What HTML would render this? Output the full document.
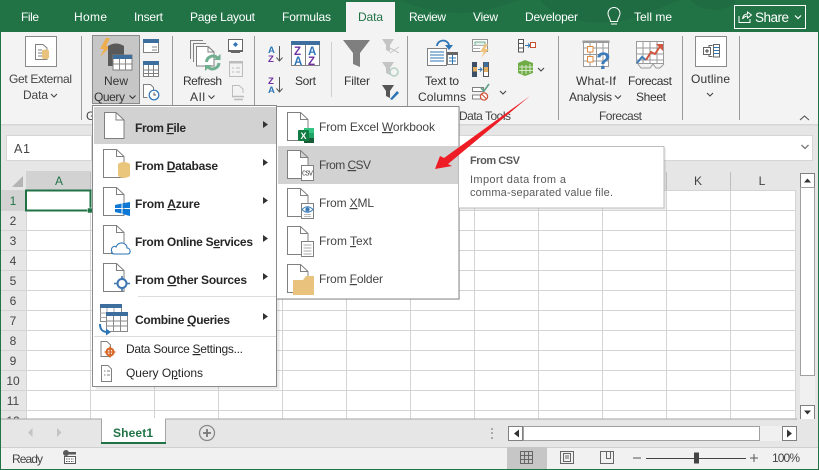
<!DOCTYPE html>
<html><head><meta charset="utf-8"><title>Excel</title>
<style>
html,body{margin:0;padding:0;background:#e6e6e6;overflow:hidden}
svg{display:block}
text{font-family:"Liberation Sans",sans-serif;font-size:12px;fill:#444}
.w{fill:#fff}
.m{fill:#262626}
.b{font-weight:bold;fill:#262626}
.g{fill:#8a8a8a}
.t{font-size:11px;fill:#595959}
.n{fill:#444}
.ln{fill:none;stroke:#7f7f7f;stroke-width:1}
.u{text-decoration:underline}
.grid line{stroke:#d4d4d4;stroke-width:1}
.chev{fill:none;stroke:#444;stroke-width:1.1}
.doc{fill:#fff;stroke:#808080;stroke-width:1}
</style></head><body>
<svg width="819" height="470" viewBox="0 0 819 470" xmlns="http://www.w3.org/2000/svg">
<defs>
<path id="dc" d="M103.500 149.500H116.500L124 156.500V177.500H103.500Z M116.500 149.500V156.500H124" fill="#fff" stroke="#808080"/>
</defs>
<rect width="819" height="470" fill="#e6e6e6"/>
<!-- title -->
<rect width="819" height="32" fill="#217346"/>
<path d="M400 0C430 14 470 18 500 6L520 0ZM540 0C560 24 610 30 650 12L680 0ZM690 0C700 10 715 14 735 4V0Z" fill="#1f6c42"/>
<rect x="346" y="2" width="49" height="30" fill="#f3f3f3"/>
<text class="w" x="21" y="21" textLength="18">File</text>
<text class="w" x="74" y="21" textLength="33">Home</text>
<text class="w" x="134" y="21" textLength="29">Insert</text>
<text class="w" x="190" y="21" textLength="65">Page Layout</text>
<text class="w" x="282" y="21" textLength="49">Formulas</text>
<text x="358" y="21" textLength="25" style="fill:#217346">Data</text>
<text class="w" x="409" y="21" textLength="37">Review</text>
<text class="w" x="473" y="21" textLength="25">View</text>
<text class="w" x="525" y="21" textLength="53">Developer</text>
<path d="M610.500 21.500C610.500 18 608 17 608 13.500A6 6 0 0 1 620 13.500C620 17 617.500 18 617.500 21.500ZM611 24H617" fill="none" stroke="#fff"/>
<text class="w" x="634" y="21" textLength="38">Tell me</text>
<rect x="734.500" y="5.500" width="71" height="23" fill="none" stroke="#fff"/>
<path d="M739 16V22.500H750V19M742.500 19C743 15.500 745 14 747.500 14V12L751.500 15L747.500 18V16C745.500 16 744 17 742.500 19Z" fill="none" stroke="#fff"/>
<text class="w" x="755" y="22" textLength="34" style="font-size:13.500px">Share</text>
<path d="M795 15.500L798 18.500L801 15.500" fill="none" stroke="#fff" stroke-width="1.200"/>
<!-- ribbon -->
<rect y="32" width="819" height="92" fill="#f3f3f3"/>
<rect y="124" width="819" height="1.500" fill="#d6d6d6"/>
<rect y="0" width="1" height="470" fill="#217346"/>
<rect x="818" y="0" width="1" height="470" fill="#217346"/>
<g fill="#9a9a9a">
<rect x="81" y="36" width="1" height="84"/><rect x="172" y="36" width="1" height="84"/><rect x="254" y="36" width="1" height="84"/>
<rect x="407" y="36" width="1" height="84"/><rect x="558" y="36" width="1" height="84"/><rect x="682" y="36" width="1" height="84"/><rect x="739" y="36" width="1" height="84"/>
<rect x="331" y="42" width="1" height="55" fill="#cfcfcf"/>
</g>
<!-- get external -->
<rect x="25.500" y="36.500" width="31" height="30" fill="#fff" stroke="#8a8a8a"/>
<path d="M35.500 44.500H43L47 48V59.500H35.500ZM38 50H42M38 53H42M38 56H42" fill="none" stroke="#7f7f7f"/>
<path d="M42 50.500Q45.500 48.500 49 50.500V58Q45.500 60.500 42 58Z" fill="#e9c37d"/>
<text x="9" y="83" textLength="63">Get External</text>
<text x="23" y="99" textLength="25">Data</text>
<path class="chev" d="M51 94L54 97L57 94"/>
<!-- new query -->
<rect x="92.500" y="35.500" width="47" height="68" fill="#c6c6c6" stroke="#8a8a8a"/>
<path d="M106 38L100 49H104L100 57L111 46H106L110 38Z" fill="#efae4e"/>
<path d="M108 46Q116 41 124 46V66H108Z" fill="#595959"/>
<rect x="113" y="55" width="19" height="15" fill="#fff" stroke="#7f7f7f"/>
<rect x="113" y="55" width="19" height="4" fill="#3d6e9e"/>
<path d="M119.500 59V70M125.500 59V70M113 64H132" stroke="#8a8a8a" fill="none"/>
<text x="104" y="85" textLength="24" style="fill:#333">New</text>
<text x="94" y="101" textLength="31" style="fill:#333">Query</text>
<path d="M129.500 95.500L132.500 98.500L135.500 95.500" fill="none" stroke="#333" stroke-width="1.100"/>
<rect x="143.500" y="39.500" width="15" height="13" fill="#fff" stroke="#808080"/>
<rect x="143" y="39" width="16" height="4" fill="#3d6e9e"/>
<path d="M152 47H157M152 50H157" stroke="#8a8a8a"/>
<rect x="143.500" y="61.500" width="15" height="15" fill="#fff" stroke="#808080"/>
<rect x="143" y="61" width="16" height="4" fill="#3d6e9e"/>
<path d="M143 70H159M143 73.500H159M148.500 65V77M153.500 65V77" stroke="#808080"/>
<path d="M147.500 97.500H143.500V84.500H150.500L153.500 87.500V92" fill="#fff" stroke="#808080"/>
<circle cx="154" cy="95" r="4.800" fill="#fff" stroke="#2e75b6" stroke-width="1.200"/>
<path d="M154 92.500V95H156" fill="none" stroke="#555"/>
<!-- refresh -->
<path d="M190.500 59V40.500H203M193.500 62V43.500H206M196.500 65V46.500H208L214 52V56" fill="none" stroke="#808080"/>
<path d="M196.500 46.500H208L214 52V66H196.500Z" fill="#fff" stroke="#808080"/>
<path d="M208 46.500V52H214" fill="none" stroke="#808080"/>
<path d="M206.500 62A6.500 6.500 0 0 1 217 57.500" fill="none" stroke="#6fae8f" stroke-width="3"/>
<path d="M219 63A6.500 6.500 0 0 1 208.500 67.500" fill="none" stroke="#6fae8f" stroke-width="3"/>
<path d="M214 60H220.500V54ZM211.500 65H205V71Z" fill="#6fae8f"/>
<text x="183" y="85" textLength="39" style="fill:#333">Refresh</text>
<text x="190" y="101" textLength="15" style="fill:#333">All</text>
<path class="chev" d="M208.500 95.500L211.500 98.500L214.500 95.500"/>
<rect x="228.500" y="39.500" width="14" height="11" fill="#fff" stroke="#666"/>
<path d="M228 51.500H243M231 52.500H240" stroke="#666"/>
<path d="M235.500 42L238 44.500L235.500 47L233 44.500Z" fill="#2e75b6"/>
<rect x="229.500" y="61.500" width="13" height="15" fill="#f3f3f3" stroke="#bcbcbc"/>
<rect x="229" y="61" width="14" height="2.500" fill="#bcbcbc"/>
<path d="M232 68H234M236 68H240M232 72H234M236 72H240" stroke="#bcbcbc"/>
<path d="M232.500 97.500V85.500H239L243 89V93" fill="none" stroke="#bcbcbc"/>
<path d="M233 96.500H244M234 99.500H243" stroke="#bcbcbc" stroke-width="1.500"/>
<!-- sort -->
<text x="268" y="53" textLength="9" style="font-size:9.500px;font-weight:bold;fill:#2e75b6">A</text>
<text x="268" y="62" textLength="9" style="font-size:9.500px;font-weight:bold;fill:#7030a0">Z</text>
<path d="M279.500 46V61M276.500 57.500L279.500 61L282.500 57.500" fill="none" stroke="#555"/>
<text x="268" y="84" textLength="9" style="font-size:9.500px;font-weight:bold;fill:#7030a0">Z</text>
<text x="268" y="93" textLength="9" style="font-size:9.500px;font-weight:bold;fill:#2e75b6">A</text>
<path d="M279.500 77V92M276.500 88.500L279.500 92L282.500 88.500" fill="none" stroke="#555"/>
<rect x="291.500" y="41.500" width="28" height="24" fill="#fff" stroke="#808080"/>
<rect x="291" y="41" width="29" height="4" fill="#3d6e9e"/>
<path d="M305.500 45V65" stroke="#808080"/>
<text x="294" y="55" style="font-size:11.500px;fill:#7030a0;font-weight:bold">Z</text>
<text x="308" y="55" style="font-size:11.500px;fill:#2e75b6;font-weight:bold">A</text>
<text x="294" y="65" style="font-size:11.500px;fill:#2e75b6;font-weight:bold">A</text>
<text x="308" y="65" style="font-size:11.500px;fill:#7030a0;font-weight:bold">Z</text>
<text x="295" y="85" textLength="21" style="fill:#333">Sort</text>
<!-- filter -->
<path d="M343 40H370L360 53V67L353 64V53Z" fill="#7f7f7f"/>
<text x="344" y="85" textLength="26" style="fill:#333">Filter</text>
<path d="M382 39H394L390 45V52L386 50V45Z" fill="#c4c4c4"/>
<path d="M388 47L399 53M399 47L390 53" stroke="#c4c4c4"/>
<path d="M382 62H394L390 68V75L386 73V68Z" fill="#c4c4c4"/>
<circle cx="394" cy="72" r="4" fill="none" stroke="#b5d0c2" stroke-width="1.500"/>
<path d="M382 85H394L390 91V98L386 96V91Z" fill="#555"/>
<path d="M390 99L397 91L399 93L392 100Z" fill="#2e75b6"/>
<!-- text to columns -->
<rect x="427.500" y="48.500" width="19" height="17" fill="#fff" stroke="#808080"/>
<path d="M430 52H444M430 55H444M430 58H444M430 61H444" stroke="#2e75b6"/>
<path d="M437 46C437 40 447 38 449 45" fill="none" stroke="#2e75b6" stroke-width="1.800"/>
<path d="M445 45H453L449 50Z" fill="#2e75b6"/>
<rect x="447.500" y="52.500" width="10" height="12" fill="#fff" stroke="#808080"/>
<rect x="447" y="52" width="11" height="3" fill="#666"/>
<path d="M449 58H456M449 61H456M452.500 55V64" stroke="#2e75b6"/>
<text x="425" y="85" textLength="34" style="fill:#333">Text to</text>
<text x="418" y="101" textLength="48" style="fill:#333">Columns</text>
<rect x="472.500" y="39.500" width="15" height="12" fill="#fff" stroke="#909090"/>
<rect x="475" y="42" width="10" height="3.500" fill="#e2efe9" stroke="#6fae8f"/>
<path d="M472 45.500H488M472 48.500H480" stroke="#b0b0b0"/>
<path d="M485 44L480 52H484L481 58L489 49H485L488 44Z" fill="#efc27d"/>
<rect x="472" y="62" width="5" height="15" fill="#3d4f66"/>
<rect x="473" y="67" width="4" height="4.500" fill="#e3ae62"/>
<rect x="483.500" y="62.500" width="5" height="14" fill="#fff" stroke="#555"/>
<rect x="484" y="62" width="4" height="5" fill="#3d6e9e"/>
<rect x="484" y="67" width="4" height="5" fill="#e3ae62"/>
<path d="M478 69.500H482M480 67.500L482 69.500L480 71.500" fill="none" stroke="#2e75b6"/>
<rect x="472.500" y="87.500" width="11" height="4" fill="#fff" stroke="#808080"/>
<rect x="472.500" y="95" width="10" height="4" fill="#fff" stroke="#808080"/>
<path d="M481 88L484 91L489 84" fill="none" stroke="#5f9f88" stroke-width="1.600"/>
<circle cx="484" cy="96.500" r="3.600" fill="#fff" stroke="#d0563f" stroke-width="1.300"/>
<path d="M481.500 94L486.500 99" stroke="#d0563f" stroke-width="1.200"/>
<path class="chev" d="M500 91L503 94L506 91"/>
<rect x="518.500" y="39.500" width="5" height="12.500" fill="#fff" stroke="#555"/>
<path d="M518 43.500H524M518 48H524" stroke="#555"/>
<path d="M525 45.500H530M528 43.500L530 45.500L528 47.500" fill="none" stroke="#2e75b6"/>
<rect x="530.500" y="42.500" width="5" height="5" fill="#fff" stroke="#c9502f"/>
<path d="M518 63L525 60L533 63V73L525 76L518 73Z" fill="#70ad47"/>
<path d="M522 65V74M526 65V74M530 64V73M519 67H533M519 70.500H533" stroke="#d7e9cb"/>
<path class="chev" d="M538 68L541 71L544 68"/>
<text x="459" y="120" textLength="52" style="fill:#444">Data Tools</text>
<!-- what if -->
<g stroke="#9a9a9a" fill="none">
<rect x="583.500" y="41.500" width="25" height="25" fill="#fff"/>
<path d="M583 48H609M583 54.500H609M583 61H609M590 41V67M596.500 41V67M603 41V67"/>
<rect x="583" y="41" width="26" height="1.500"/>
</g>
<rect x="587.500" y="46.500" width="5.500" height="5.500" fill="#fff" stroke="#e28a3c"/>
<rect x="587.500" y="56.500" width="5.500" height="5.500" fill="#fff" stroke="#e28a3c"/>
<text x="596" y="69" style="font-size:24px;font-weight:bold;fill:#3e7cb9">?</text>
<text x="576" y="85" textLength="40" style="fill:#333">What-If</text>
<text x="569" y="101" textLength="43" style="fill:#333">Analysis</text>
<path class="chev" d="M615 95.500L618 98.500L621 95.500"/>
<!-- forecast -->
<g stroke="#9a9a9a" fill="none">
<rect x="636.500" y="41.500" width="27" height="22" fill="#fff"/>
<path d="M636 48H664M636 54H664M636 60H664M643 41V64M650 41V64M657 41V64"/>
</g>
<path d="M637 63L642 57L646 60" fill="none" stroke="#3e7cb9" stroke-width="2"/>
<path d="M646 60L651 52L655 54L661 45" fill="none" stroke="#d0563f" stroke-width="2"/>
<path d="M656 44H663V51Z" fill="#d0563f"/>
<path d="M638 64L641 68H650L653 64M653 64L656 68H660L664 64" fill="none" stroke="#9a9a9a"/>
<text x="628" y="85" textLength="44" style="fill:#333">Forecast</text>
<text x="636" y="101" textLength="30" style="fill:#333">Sheet</text>
<text x="599" y="120" textLength="43">Forecast</text>
<!-- outline -->
<rect x="695.500" y="36.500" width="31" height="30" fill="#fff" stroke="#8a8a8a"/>
<rect x="703.500" y="47.500" width="7" height="7" fill="#fff" stroke="#666"/>
<path d="M705 51H709M707 49V53" stroke="#444"/>
<path d="M712.500 45.500H709V47M712.500 56.500H709V55" fill="none" stroke="#666"/>
<rect x="713.500" y="44.500" width="6" height="12.500" fill="#fff" stroke="#666"/>
<path d="M714 47.500H719M714 50.500H719M714 53.500H719" stroke="#2e75b6"/>
<text x="691" y="83" textLength="39" style="fill:#333">Outline</text>
<path class="chev" d="M707 93L710 96L713 93"/>
<path d="M800 120L804.500 116L809 120" fill="none" stroke="#555" stroke-width="1.100"/>
<text x="86" y="120" style="fill:#444">G</text>
<!-- formula bar -->
<rect x="6.500" y="135.500" width="85" height="25" fill="#fff" stroke="#d6d6d6"/>
<rect x="150.500" y="135.500" width="662" height="25" fill="#fff" stroke="#d6d6d6"/>
<text x="14" y="153" textLength="16" style="font-size:12.500px;fill:#444">A1</text>
<path d="M801.500 145L805 148.500L808.500 145" fill="none" stroke="#777" stroke-width="1.300"/>
<!-- column headers -->
<rect x="1" y="171" width="796" height="19" fill="#e6e6e6"/>
<rect x="26" y="171" width="65" height="19" fill="#d2d2d2"/>
<path d="M12 187H23V176Z" fill="#b4b4b4"/>
<text x="59" y="185" text-anchor="middle" style="fill:#217346">A</text>
<text x="698" y="185" text-anchor="middle" style="fill:#444">K</text>
<text x="762" y="185" text-anchor="middle" style="fill:#444">L</text>
<path d="M90.500 172V190M154.500 172V190M218.500 172V190M282.500 172V190M346.500 172V190M410.500 172V190M474.500 172V190M538.500 172V190M602.500 172V190M666.500 172V190M730.500 172V190" stroke="#bdbdbd"/>
<!-- grid -->
<rect x="26" y="190" width="770" height="230" fill="#fff"/>
<rect x="1" y="190" width="25" height="230" fill="#e6e6e6"/>
<rect x="1" y="191" width="25" height="20" fill="#d2d2d2"/>
<g class="grid">
<line x1="1" x2="796" y1="190.500" y2="190.500"/><line x1="1" x2="796" y1="210.500" y2="210.500"/><line x1="1" x2="796" y1="230.500" y2="230.500"/><line x1="1" x2="796" y1="250.500" y2="250.500"/><line x1="1" x2="796" y1="270.500" y2="270.500"/><line x1="1" x2="796" y1="290.500" y2="290.500"/><line x1="1" x2="796" y1="310.500" y2="310.500"/><line x1="1" x2="796" y1="330.500" y2="330.500"/><line x1="1" x2="796" y1="350.500" y2="350.500"/><line x1="1" x2="796" y1="370.500" y2="370.500"/><line x1="1" x2="796" y1="390.500" y2="390.500"/><line x1="1" x2="796" y1="410.500" y2="410.500"/>
<line x1="26.500" x2="26.500" y1="190" y2="420"/><line x1="90.500" x2="90.500" y1="190" y2="420"/><line x1="154.500" x2="154.500" y1="190" y2="420"/><line x1="218.500" x2="218.500" y1="190" y2="420"/><line x1="282.500" x2="282.500" y1="190" y2="420"/><line x1="346.500" x2="346.500" y1="190" y2="420"/><line x1="410.500" x2="410.500" y1="190" y2="420"/><line x1="474.500" x2="474.500" y1="190" y2="420"/><line x1="538.500" x2="538.500" y1="190" y2="420"/><line x1="602.500" x2="602.500" y1="190" y2="420"/><line x1="666.500" x2="666.500" y1="190" y2="420"/><line x1="730.500" x2="730.500" y1="190" y2="420"/><line x1="795.500" x2="795.500" y1="190" y2="420"/>
</g>
<g text-anchor="middle">
<text x="13" y="205" style="fill:#217346">1</text><text x="13" y="225">2</text><text x="13" y="245">3</text><text x="13" y="265">4</text><text x="13" y="285">5</text><text x="13" y="305">6</text><text x="13" y="325">7</text><text x="13" y="345">8</text><text x="13" y="365">9</text><text x="13" y="385">10</text><text x="13" y="405">11</text><text x="13" y="425">12</text>
</g>
<rect x="26" y="190.500" width="64.500" height="20" fill="#fff" stroke="#217346" stroke-width="2"/>
<rect x="87.500" y="208" width="5" height="5" fill="#217346" stroke="#fff" stroke-width=".5"/>
<!-- vertical scroll -->
<rect x="797" y="171" width="21" height="249" fill="#e6e6e6"/>
<rect x="800" y="187" width="15" height="219" fill="#f0f0f0"/>
<rect x="800.500" y="173.500" width="14" height="14" fill="#fff" stroke="#7f7f7f"/>
<path d="M804 182.500H811L807.500 178.500Z" fill="#333"/>
<rect x="800.500" y="187.500" width="14" height="188" fill="#fff" stroke="#a0a0a0"/>
<rect x="800.500" y="405.500" width="14" height="14" fill="#fff" stroke="#7f7f7f"/>
<path d="M804 410.500H811L807.500 414.500Z" fill="#333"/>
<!-- tabs bar -->
<rect x="1" y="419" width="817" height="28" fill="#e6e6e6"/>
<rect x="1" y="418.500" width="796" height="1" fill="#a6a6a6"/>
<path d="M101.500 442V419.500H165.500V442" fill="#fff" stroke="#a6a6a6"/>
<rect x="102" y="418" width="63" height="2" fill="#fff"/>
<rect x="101" y="442" width="65" height="2" fill="#217346"/>
<text x="113" y="437" textLength="40" style="font-weight:bold;fill:#217346">Sheet1</text>
<path d="M32.500 428L28 432.500L32.500 437ZM57 428L61.500 432.500L57 437Z" fill="#c4c4c4"/>
<circle cx="207" cy="433" r="7.500" fill="none" stroke="#8a8a8a" stroke-width="1.300"/>
<path d="M203 433H211M207 429V437" stroke="#777" stroke-width="1.800"/>
<path d="M492 428v2M492 432v2M492 437v2" stroke="#aaa" stroke-width="2"/>
<rect x="508.500" y="426.500" width="14" height="14" fill="#fff" stroke="#808080"/>
<path d="M519 429.500L514 433.500L519 437.500Z" fill="#333"/>
<rect x="523" y="426" width="259" height="15" fill="#f0f0f0"/>
<rect x="523.500" y="426.500" width="236" height="14" fill="#fff" stroke="#a0a0a0"/>
<rect x="782.500" y="426.500" width="14" height="14" fill="#fff" stroke="#808080"/>
<path d="M787 429.500L792 433.500L787 437.500Z" fill="#333"/>
<!-- status -->
<rect x="1" y="447" width="817" height="22" fill="#f1f1f1"/>
<rect x="1" y="447" width="817" height="1" fill="#cfcfcf"/>
<rect y="469" width="819" height="1" fill="#217346"/>
<text x="12" y="463" textLength="31" style="fill:#444">Ready</text>
<circle cx="66" cy="453" r="3" fill="#595959"/>
<rect x="64" y="452" width="12" height="2.500" fill="#595959"/>
<rect x="64.500" y="456.500" width="11" height="7" fill="#fff" stroke="#595959"/>
<path d="M66 459H74M66 461.500H74" stroke="#595959" stroke-dasharray="1.500 1"/>
<rect x="507" y="447" width="40" height="22" fill="#c6c6c6"/>
<path d="M520.500 451.500H532.500V463.500H520.500ZM524.500 451.500V463.500M528.500 451.500V463.500M520.500 455.500H532.500M520.500 459.500H532.500" fill="none" stroke="#666"/>
<path d="M560.500 451.500H573.500V463.500H560.500Z M563.500 453.500H570.500V461.500H563.500Z M565 456H569M565 458H569" fill="none" stroke="#666"/>
<path d="M600.500 451.500H613.500V463.500H600.500Z M606.500 451.500V458.500H610.500V451.500" fill="none" stroke="#666"/>
<path d="M633 458H641M750 458H758M754 454V462" stroke="#555"/>
<rect x="646" y="458" width="100" height="1" fill="#444"/>
<rect x="694" y="452.500" width="5" height="11" fill="#444"/>
<text x="772" y="462" textLength="28" style="fill:#444">100%</text>
<!-- menu1 shadow -->
<rect x="93.500" y="105.500" width="184" height="282" fill="#000" opacity=".08" transform="translate(2 2)"/>
<rect x="92.500" y="105.500" width="184" height="281" fill="#fff" stroke="#8a8a8a"/>
<rect x="94" y="107" width="182" height="37" fill="#d2d2d2"/>
<!-- item icons -->
<path d="M104.500 112.500H116L124 120V138.500H104.500Z" fill="#fff" stroke="#808080"/><path d="M116 112.500V120H124" fill="none" stroke="#808080"/>
<use href="#dc"/>
<use href="#dc" y="38"/>
<use href="#dc" y="76"/>
<use href="#dc" y="114"/>
<path d="M118 164Q123.500 160 130 164V176Q123.500 180 118 176Z" fill="#eac67c"/>
<path d="M115 208H121.500V203.500L115 205ZM122.500 208H130V202L122.500 203.300ZM115 209H121.500V213.500L115 212ZM122.500 209H130V216L122.500 214Z" fill="#0e78d4"/>
<path d="M112 252C110 248 114 245 116 247C118 241 127 242 127 248C131 248 131 254 128 254H114C112 254 111 252 112 252Z" fill="#fff" stroke="#2e75b6" stroke-width="1.100"/>
<circle cx="122" cy="283.500" r="4.500" fill="#fff" stroke="#3d75b0" stroke-width="2"/>
<path d="M114 283.500H118M126 283.500H130M122 276V279M122 288V291" stroke="#3d75b0" stroke-width="1.600"/>
<!-- combine -->
<rect x="100.500" y="304.500" width="21" height="17" fill="#fff" stroke="#8a8a8a"/>
<rect x="100" y="304" width="22" height="4" fill="#3d6e9e"/>
<path d="M107 308V322M114 308V322M100 313H122M100 317.500H122" stroke="#aaa"/>
<rect x="106.500" y="312.500" width="21" height="19" fill="#fff" stroke="#8a8a8a"/>
<rect x="106" y="312" width="22" height="4" fill="#3d6e9e"/>
<path d="M113.500 316V332M120.500 316V332M106 321H128M106 326H128" stroke="#8a8a8a"/>
<path d="M100 324C100 331 104 332 108 332" fill="none" stroke="#2e75b6" stroke-width="2"/>
<path d="M106 328.500L111 332L106 335.500Z" fill="#2e75b6"/>
<!-- data source -->
<path d="M101 341.500H107L110.500 345V356.500H101Z" fill="#fff" stroke="#808080"/>
<circle cx="110" cy="352" r="3.500" fill="none" stroke="#d9692b" stroke-width="2.200"/>
<path d="M110 346.500v11M104.500 352h11" stroke="#d9692b" stroke-width="1.300"/>
<path d="M101.500 365.500H108L111.500 369V381.500H101.500Z M104 371H105.500M107 371H110M104 375H105.500M107 375H110" fill="#fff" stroke="#808080"/>
<!-- menu1 text -->
<text class="b" x="135" y="132" textLength="51">From <tspan class="u">F</tspan>ile</text>
<text class="b" x="135" y="170" textLength="83">From <tspan class="u">D</tspan>atabase</text>
<text class="b" x="135" y="208" textLength="65">From <tspan class="u">A</tspan>zure</text>
<text class="b" x="135" y="246" textLength="118">From Online S<tspan class="u">e</tspan>rvices</text>
<text class="b" x="135" y="284" textLength="112">From <tspan class="u">O</tspan>ther Sources</text>
<text class="b" x="135" y="324" textLength="95">Combine <tspan class="u">Q</tspan>ueries</text>
<text class="m" x="126" y="353" textLength="117">Data Source <tspan class="u">S</tspan>ettings...</text>
<text class="m" x="126" y="377" textLength="77">Query O<tspan class="u">p</tspan>tions</text>
<g fill="#333">
<path d="M263 121L268 124.500L263 128Z"/>
<path d="M263 159L268 162.500L263 166Z"/>
<path d="M263 197L268 200.500L263 204Z"/>
<path d="M263 235L268 238.500L263 242Z"/>
<path d="M263 273L268 276.500L263 280Z"/>
<path d="M263 313L268 316.500L263 320Z"/>
</g>
<rect x="138" y="296" width="138" height="1" fill="#dcdcdc"/>
<rect x="94" y="336" width="182" height="1" fill="#dcdcdc"/>
<!-- menu2 -->
<rect x="278" y="108" width="182" height="192" fill="#000" opacity=".08"/>
<rect x="276.500" y="106.500" width="182.500" height="192.500" fill="#fff" stroke="#8a8a8a"/>
<rect x="278" y="146" width="181" height="38" fill="#d2d2d2"/>
<g transform="translate(184 -37)">
<use href="#dc"/>
<use href="#dc" y="38"/>
<use href="#dc" y="76"/>
<use href="#dc" y="114"/>
<use href="#dc" y="152"/>
</g>
<!-- excel icon -->
<rect x="304" y="128" width="10" height="15" fill="#21a366"/>
<rect x="304" y="128" width="10" height="5" fill="#33c481"/>
<rect x="304" y="138" width="10" height="5" fill="#185c37"/>
<rect x="298" y="130" width="11" height="11" rx="1" fill="#107c41"/>
<text x="300.500" y="139" style="font-size:9px;font-weight:bold;fill:#fff">X</text>
<!-- csv -->
<rect x="301.500" y="165.500" width="12" height="15" fill="#fff" stroke="#808080"/>
<text x="302" y="175.500" textLength="11" style="font-size:7px;font-family:'Liberation Mono',monospace;fill:#444">CSV</text>
<!-- xml -->
<rect x="301.500" y="203.500" width="12" height="15" fill="#fff" stroke="#808080"/>
<path d="M302 209.500Q307.500 204 313 209.500Q307.500 215 302 209.500Z" fill="#fff" stroke="#3e7cb9"/>
<circle cx="307.500" cy="209.500" r="2.200" fill="#3e7cb9"/>
<path d="M304 214.500H311M304 216.500H311" stroke="#bbb"/>
<!-- text -->
<rect x="301.500" y="241.500" width="12" height="15" fill="#fff" stroke="#808080"/>
<path d="M303.500 245H311.500M303.500 248H311.500M303.500 251H311.500M303.500 254H311.500" stroke="#aaa"/>
<!-- folder -->
<path d="M293 295V280H303L306 276H314V295Z" fill="#e9c37d"/>
<text class="n" x="319" y="131" textLength="116">From Excel <tspan class="u">W</tspan>orkbook</text>
<text class="n" x="319" y="169" textLength="52">From <tspan class="u">C</tspan>SV</text>
<text class="n" x="319" y="207" textLength="55">From <tspan class="u">X</tspan>ML</text>
<text class="n" x="319" y="245" textLength="53">From <tspan class="u">T</tspan>ext</text>
<text class="n" x="319" y="283" textLength="64">From <tspan class="u">F</tspan>older</text>
<!-- tooltip -->
<rect x="460" y="148" width="206" height="62" fill="#000" opacity=".07"/>
<rect x="458.500" y="146.500" width="205.500" height="61.500" fill="#fff" stroke="#bdbdbd"/>
<text x="470" y="164" textLength="50" style="font-weight:bold;font-size:11px;fill:#595959">From CSV</text>
<text class="t" x="470" y="183" textLength="96">Import data from a</text>
<text class="t" x="470" y="196" textLength="143">comma-separated value file.</text>
<!-- arrow -->
<path d="M530 96L444 158L440 156L435 169L452 166L448 164Z" fill="#ee1c25"/>
</svg>
</body></html>
